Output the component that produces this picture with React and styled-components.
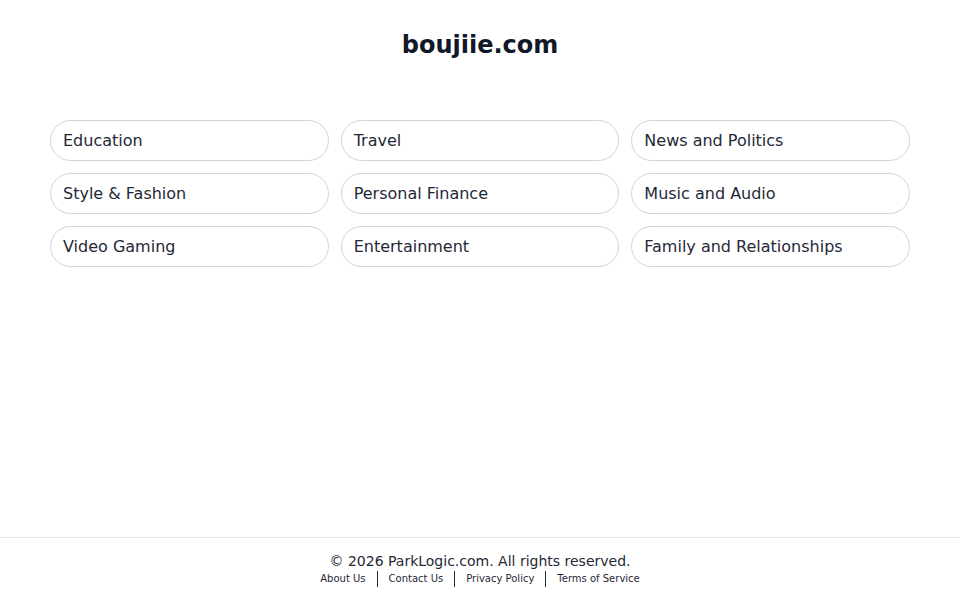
import React from "react";
import styled, { createGlobalStyle } from "styled-components";

const GlobalStyle = createGlobalStyle`
  html, body {
    margin: 0;
    padding: 0;
    background: #fff;
  }
  body {
    font-family: "DejaVu Sans", Verdana, sans-serif;
    color: #111827;
  }
`;

const Page = styled.div`
  min-height: 100vh;
  display: flex;
  flex-direction: column;
`;

const Header = styled.header`
  padding: 29px 0 0;
  text-align: center;
`;

const Title = styled.h1`
  margin: 0;
  font-size: 24px;
  line-height: 32px;
  font-weight: bold;
  color: #111827;
`;

const Main = styled.main`
  flex: 1;
  padding-top: 59px;
`;

const Grid = styled.div`
  max-width: 860px;
  margin: 0 auto;
  display: grid;
  grid-template-columns: repeat(3, 1fr);
  gap: 12px;
`;

const Pill = styled.a`
  display: flex;
  align-items: center;
  height: 41px;
  box-sizing: border-box;
  padding: 0 12px;
  border: 1px solid #d4d4d8;
  border-radius: 999px;
  font-size: 16px;
  color: #1f2937;
  text-decoration: none;
  cursor: pointer;
`;

const Footer = styled.footer`
  border-top: 1px solid #e5e7eb;
  padding: 14px 0 13px;
  text-align: center;
`;

const Copy = styled.p`
  margin: 0;
  font-size: 14px;
  line-height: 18px;
  color: #1f2937;
`;

const Links = styled.nav`
  display: flex;
  justify-content: center;
  align-items: center;
  margin-top: 1px;
`;

const FooterLink = styled.a`
  font-size: 10px;
  line-height: 16px;
  color: #1f2937;
  text-decoration: none;
`;

const Sep = styled.span`
  display: inline-block;
  width: 1px;
  height: 16px;
  background: #1f2937;
  margin: 0 11px;
`;

const categories = [
  "Education",
  "Travel",
  "News and Politics",
  "Style & Fashion",
  "Personal Finance",
  "Music and Audio",
  "Video Gaming",
  "Entertainment",
  "Family and Relationships",
];

const footerLinks = ["About Us", "Contact Us", "Privacy Policy", "Terms of Service"];

const App = () => {
  return (
    <Page>
      <GlobalStyle />
      <Header>
        <Title>boujiie.com</Title>
      </Header>
      <Main>
        <Grid>
          {categories.map((c) => (
            <Pill key={c}>{c}</Pill>
          ))}
        </Grid>
      </Main>
      <Footer>
        <Copy>© 2026 ParkLogic.com. All rights reserved.</Copy>
        <Links>
          {footerLinks.map((l, i) => (
            <React.Fragment key={l}>
              {i > 0 && <Sep />}
              <FooterLink>{l}</FooterLink>
            </React.Fragment>
          ))}
        </Links>
      </Footer>
    </Page>
  );
};

export default App;
